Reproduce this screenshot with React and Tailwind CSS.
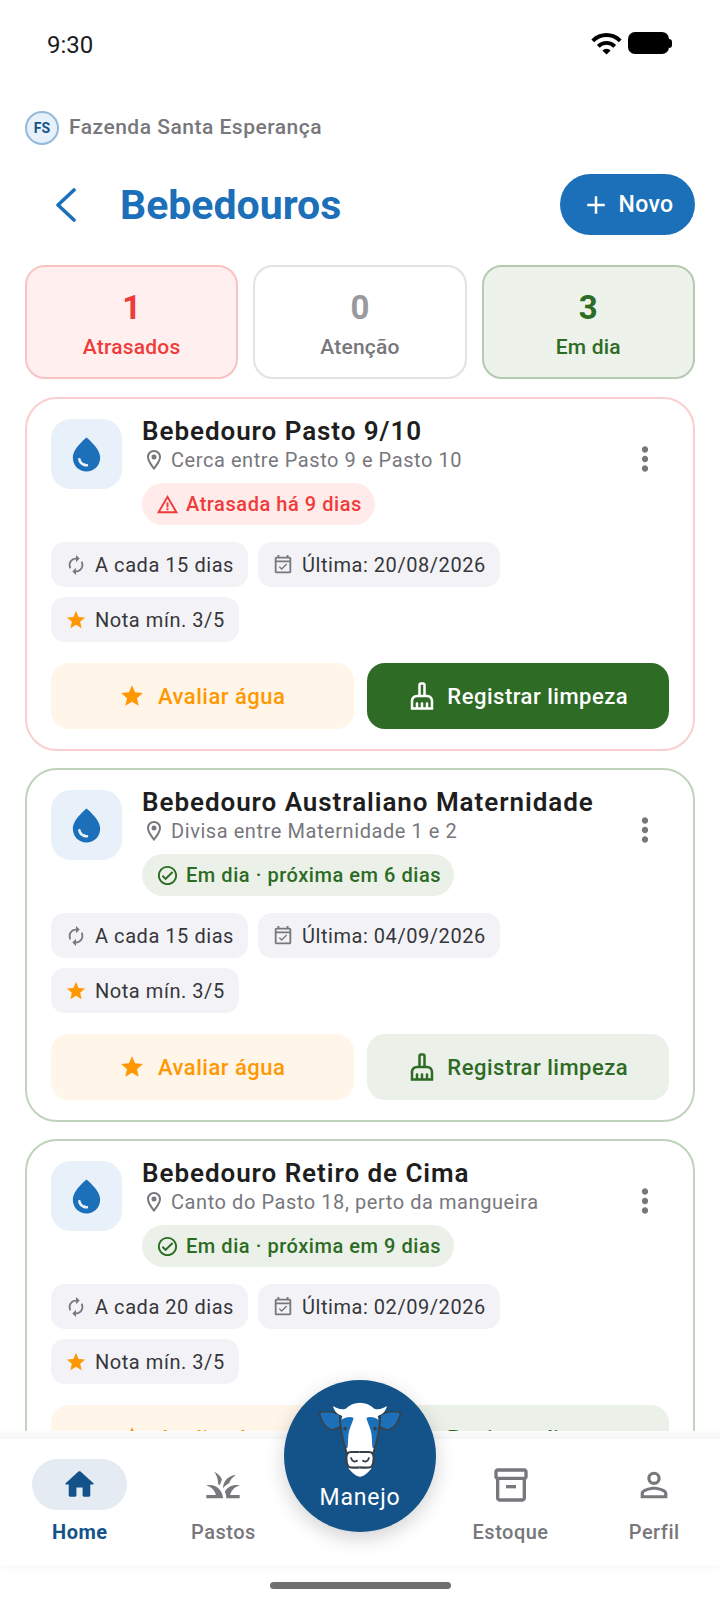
import React from 'react';
import {
  MdAdd, MdAutorenew, MdGrass, MdMoreVert, MdOutlineCheckCircle, MdOutlineCleaningServices,
  MdOutlineEventAvailable, MdOutlineInventory2, MdOutlineLocationOn, MdPersonOutline, MdStar,
  MdWarningAmber, MdWaterDrop, MdWifi,
} from 'react-icons/md';

const bebedouros = [
  { id: 1, name: 'Bebedouro Pasto 9/10', place: 'Cerca entre Pasto 9 e Pasto 10', status: 'Atrasada há 9 dias', late: true, every: 'A cada 15 dias', last: 'Última: 20/08/2026' },
  { id: 2, name: 'Bebedouro Australiano Maternidade', place: 'Divisa entre Maternidade 1 e 2', status: 'Em dia · próxima em 6 dias', late: false, every: 'A cada 15 dias', last: 'Última: 04/09/2026' },
  { id: 3, name: 'Bebedouro Retiro de Cima', place: 'Canto do Pasto 18, perto da mangueira', status: 'Em dia · próxima em 9 dias', late: false, every: 'A cada 20 dias', last: 'Última: 02/09/2026' },
];

const SummaryCard = ({ value, label, box, color, labelColor }) => (
  <div className={`flex-1 h-[114px] pt-[4px] rounded-[20px] border-2 flex flex-col items-center justify-center ${box}`}>
    <p className={`text-[33px] leading-[40px] font-bold ${color}`}>{value}</p>
    <p className={`text-[21px] leading-[28px] mt-[5px] font-medium tracking-[0.2px] ${labelColor}`}>{label}</p>
  </div>
);

const Chip = ({ icon, children }) => (
  <div className="h-[45px] px-[14px] rounded-[14px] bg-[#f3f3f7] flex items-center gap-[8px] text-[20px] font-[450] tracking-[0.55px] text-[#36363b]">
    {icon}
    <span>{children}</span>
  </div>
);

const BebedouroCard = ({ item }) => (
  <div className={`h-[354px] shrink-0 rounded-[32px] border-2 bg-white pt-[20px] px-[24px] ${item.late ? 'border-[#f9cfcd]' : 'border-[#c0d3bc]'}`}>
    <div className="flex">
      <div className="w-[71px] h-[70px] rounded-[20px] bg-[#e8f0f9] flex items-center justify-center shrink-0">
        <MdWaterDrop size={41} className="text-[#1c6fb9]" />
      </div>
      <div className="ml-[20px] flex-1">
        <p className="text-[26px] leading-[30px] mt-[-3px] font-semibold tracking-[0.95px] text-[#1e1e20] whitespace-nowrap">{item.name}</p>
        <div className="flex items-center gap-[5px] mt-[1px] text-[#77777c]">
          <MdOutlineLocationOn size={24} />
          <span className="text-[20px] leading-[26px] tracking-[0.57px]">{item.place}</span>
        </div>
        <div className={`inline-flex items-center gap-[7px] h-[42px] mt-[10px] pl-[14px] pr-[13px] rounded-full text-[20px] font-medium tracking-[0.55px] ${item.late ? 'bg-[#ffebea] text-[#ef3b39]' : 'bg-[#ebf1e9] text-[#2c6b24]'}`}>
          {item.late ? <MdWarningAmber size={23} /> : <MdOutlineCheckCircle size={23} />}
          <span>{item.status}</span>
        </div>
      </div>
      <MdMoreVert size={38} className="text-[#77777c] mt-[21px] mr-[5px] shrink-0" />
    </div>
    <div className="flex flex-wrap gap-x-[10px] gap-y-[10px] mt-[17px]">
      <Chip icon={<MdAutorenew size={22} className="text-[#77777c]" />}>{item.every}</Chip>
      <Chip icon={<MdOutlineEventAvailable size={22} className="text-[#77777c]" />}>{item.last}</Chip>
      <Chip icon={<MdStar size={22} className="text-[#ff9800]" />}>Nota mín. 3/5</Chip>
    </div>
    <div className="flex gap-[13px] mt-[21px]">
      <button className="flex-1 h-[66px] rounded-[18px] bg-[#fff5e8] text-[#ff9800] flex items-center justify-center gap-[13px] text-[22px] font-medium tracking-[0.5px]">
        <MdStar size={26} />
        Avaliar água
      </button>
      <button className={`flex-1 h-[66px] rounded-[18px] flex items-center justify-center gap-[10px] text-[22px] font-medium tracking-[0.5px] ${item.late ? 'bg-[#2e6b24] text-white' : 'bg-[#ebf1e9] text-[#2e6b24]'}`}>
        <MdOutlineCleaningServices size={30} />
        Registrar limpeza
      </button>
    </div>
  </div>
);

// left half of the cow, mirrored for the right half. Nothing in the icon packs looks like it
const CowHalf = ({ transform }) => (
  <g transform={transform}>
    <path d="M74 50 C52 40 30 38 13 44 C17 64 28 86 44 94 C56 98 68 92 78 84 Z" fill="#1c6fb9" stroke="#37414a" strokeWidth="5" strokeLinejoin="round" />
    <path d="M136 14 C118 14 104 20 92 32 C80 36 66 32 54 24 C58 40 68 50 82 54 L78 70 L94 162 L136 162 Z" fill="#fff" />
    <path d="M78 66 C90 58 106 54 116 60 C112 76 102 92 100 112 L98 148 L92 152 C84 125 78 100 78 66 Z" fill="#1c6fb9" />
    <path d="M75 54 C75 90 83 130 95 165" fill="none" stroke="#37414a" strokeWidth="6" strokeLinecap="round" />
    <circle cx="90" cy="92" r="5.5" fill="#37414a" />
    <path d="M136 162 L108 162 C98 162 94 170 94 180 C94 192 96 202 100 210 C110 224 124 236 136 236 Z" fill="#fff" />
    <path d="M136 162 L108 162 C98 162 94 170 94 180 C94 192 96 200 100 206 C112 212 124 208 136 208" fill="none" stroke="#37414a" strokeWidth="6.5" />
    <path d="M108 180 C112 192 120 192 126 188" fill="none" stroke="#37414a" strokeWidth="5.5" strokeLinecap="round" />
  </g>
);

const CowFace = () => (
  <svg viewBox="0 0 270 252" className="w-[90px] h-[84px]">
    <CowHalf />
    <CowHalf transform="translate(270 0) scale(-1 1)" />
  </svg>
);

const HomeIcon = () => (
  <svg viewBox="0 0 24 24" fill="currentColor" className="w-[37px] h-[37px]">
    <path d="M10 19v-5h4v5c0 .55.45 1 1 1h3c.55 0 1-.45 1-1v-7h1.7c.46 0 .68-.57.33-.87L12.67 3.6c-.38-.34-.96-.34-1.34 0l-8.36 7.53c-.34.3-.13.87.33.87H5v7c0 .55.45 1 1 1h3c.55 0 1-.45 1-1z" />
  </svg>
);

const NavItem = ({ icon, label, active }) => (
  <div className={`w-[143.6px] shrink-0 flex flex-col items-center text-[20px] tracking-[0.5px] ${active ? 'text-[#14538a] font-bold' : 'text-[#77777c] font-medium'}`}>
    <div className={`w-[95px] h-[51px] rounded-full flex items-center justify-center ${active ? 'bg-[#e4ebf3]' : ''}`}>{icon}</div>
    <span className="mt-[8px] leading-[28px]">{label}</span>
  </div>
);

export default function App() {
  return (
    <div className="relative w-[720px] h-[1606px] overflow-hidden bg-white font-['Roboto',sans-serif]">
      {/* status bar */}
      <div className="flex items-center justify-between h-[86px] pl-[47px] pr-[48px]">
        <span className="text-[24px] mt-[3px] text-[#1c1c1e]">9:30</span>
        <div className="flex items-center gap-[5px]">
          <MdWifi size={33} className="text-black" />
          <div className="flex items-center">
            <div className="w-[41px] h-[22px] rounded-[7px] bg-black" />
            <div className="w-[3px] h-[9px] rounded-r-sm bg-black" />
          </div>
        </div>
      </div>

      <div className="flex items-center gap-[10px] mt-[25px] pl-[25px]">
        <div className="w-[34px] h-[34px] rounded-full border-2 border-[#93b9dd] bg-[#e8f0f9] flex items-center justify-center text-[14px] font-bold text-[#14538a]">FS</div>
        <span className="text-[21px] font-medium tracking-[0.5px] text-[#77777c]">Fazenda Santa Esperança</span>
      </div>

      <div className="flex items-center justify-between mt-[29px] pr-[25px]">
        <div className="flex items-center">
          <svg viewBox="0 0 22 34" fill="none" stroke="#1c6fb9" strokeWidth="3.6" strokeLinecap="round" strokeLinejoin="round" className="w-[22px] h-[34px] ml-[55px]">
            <path d="M19 2 L3 17 L19 32" />
          </svg>
          <h1 className="ml-[43px] text-[41px] leading-[48px] font-bold text-[#1c6fb9]">Bebedouros</h1>
        </div>
        <button className="w-[135px] h-[61px] rounded-full bg-[#1c6fb9] text-white flex items-center justify-center gap-[7px] text-[23px] font-medium tracking-[0.4px]">
          <MdAdd size={30} />
          <span className="mt-[1px]">Novo</span>
        </button>
      </div>

      <div className="flex gap-[15px] mt-[30px] px-[25px]">
        <SummaryCard value="1" label="Atrasados" box="bg-[#fff0ef] border-[#f8c4c2]" color="text-[#ef3b39]" labelColor="text-[#ef3b39]" />
        <SummaryCard value="0" label="Atenção" box="bg-white border-[#e2e2e4]" color="text-[#9a9a9e]" labelColor="text-[#77777c]" />
        <SummaryCard value="3" label="Em dia" box="bg-[#edf2ea] border-[#b4cbb0]" color="text-[#2e6b24]" labelColor="text-[#2e6b24]" />
      </div>

      <div className="flex flex-col gap-[17px] mt-[18px] px-[25px]">
        {bebedouros.map(item => <BebedouroCard key={item.id} item={item} />)}
      </div>

      {/* bottom nav lies over the list */}
      <div className="absolute left-0 right-0 bottom-0 h-[167px] bg-white">
        <div className="absolute left-0 right-0 top-[-8px] h-[8px] bg-gradient-to-b from-[#fcfcfc] to-[#f5f5f6]" />
        <div className="flex h-[127px] pt-[20px] pl-[8px] shadow-[0_2px_6px_rgba(0,0,0,0.04)]">
          <NavItem active label="Home" icon={<HomeIcon />} />
          <NavItem label="Pastos" icon={<MdGrass size={40} />} />
          <div className="w-[143.6px] shrink-0" />
          <NavItem label="Estoque" icon={<MdOutlineInventory2 size={40} />} />
          <NavItem label="Perfil" icon={<MdPersonOutline size={40} />} />
        </div>
        <div className="w-[181px] h-[7px] mx-auto mt-[16px] rounded-full bg-[#707070]" />
      </div>

      <div className="absolute left-[284px] top-[1380px] w-[152px] h-[152px] rounded-full bg-[#14538a] shadow-[0_6px_20px_rgba(0,0,0,0.18)] flex flex-col items-center pt-[18px]">
        <CowFace />
        <span className="text-[23px] leading-[28px] mt-[2px] font-normal tracking-[0.8px] text-white">Manejo</span>
      </div>
    </div>
  );
}
